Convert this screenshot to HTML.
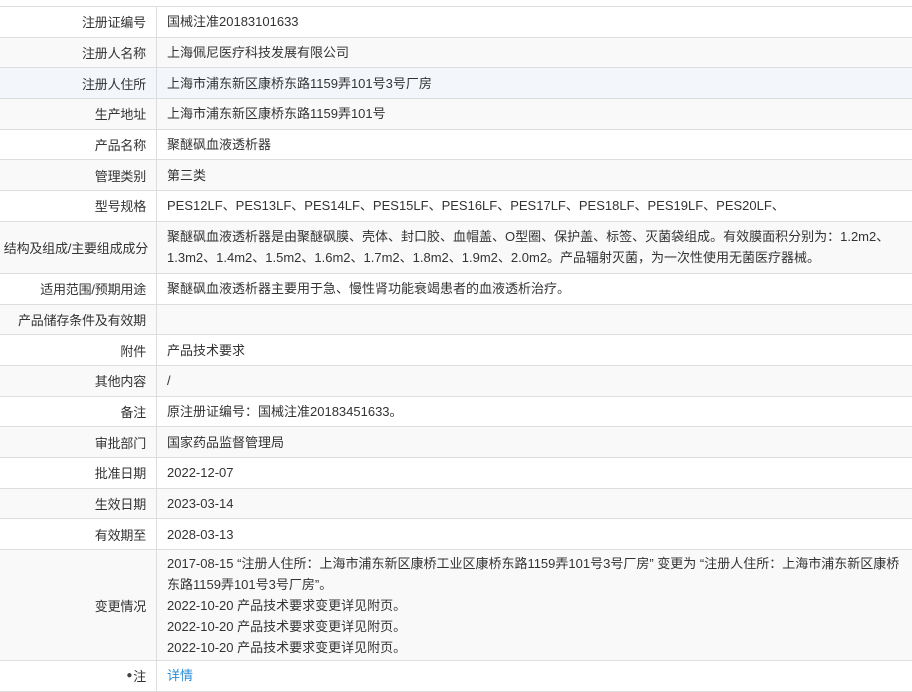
<!DOCTYPE html>
<html><head><meta charset="utf-8"><style>
body{margin:0;background:#fff;font-family:"Liberation Sans","Noto Sans CJK SC",sans-serif;font-size:13px;color:#333;}
.t{position:absolute;top:6px;left:0;width:912px;border-top:1px solid #ddd;}
.r{display:flex;border-bottom:1px solid #ddd;box-sizing:border-box;height:30.7px;}
.r:nth-child(even){background:#f9f9f9;}
.r.h{background:#f3f6fb;}
.l{width:157px;flex:none;border-right:1px solid #ddd;box-sizing:border-box;text-align:right;padding-right:10px;display:flex;align-items:center;justify-content:flex-end;white-space:nowrap;letter-spacing:-0.2px;}
.v{padding-left:10px;padding-right:6px;display:flex;align-items:center;line-height:21px;}
a{color:#2a8fd7;text-decoration:none;}
</style></head><body>
<div class="t">
<div class="r"><div class="l">注册证编号</div><div class="v">国械注准20183101633</div></div>
<div class="r"><div class="l">注册人名称</div><div class="v">上海佩尼医疗科技发展有限公司</div></div>
<div class="r h"><div class="l">注册人住所</div><div class="v">上海市浦东新区康桥东路1159弄101号3号厂房</div></div>
<div class="r"><div class="l">生产地址</div><div class="v">上海市浦东新区康桥东路1159弄101号</div></div>
<div class="r"><div class="l">产品名称</div><div class="v">聚醚砜血液透析器</div></div>
<div class="r"><div class="l">管理类别</div><div class="v">第三类</div></div>
<div class="r"><div class="l">型号规格</div><div class="v">PES12LF、PES13LF、PES14LF、PES15LF、PES16LF、PES17LF、PES18LF、PES19LF、PES20LF、</div></div>
<div class="r" style="height:52px"><div class="l" style="padding-right:8px">结构及组成/主要组成成分</div><div class="v">聚醚砜血液透析器是由聚醚砜膜、壳体、封口胶、血帽盖、O型圈、保护盖、标签、灭菌袋组成。有效膜面积分别为：1.2m2、1.3m2、1.4m2、1.5m2、1.6m2、1.7m2、1.8m2、1.9m2、2.0m2。产品辐射灭菌，为一次性使用无菌医疗器械。</div></div>
<div class="r"><div class="l">适用范围/预期用途</div><div class="v">聚醚砜血液透析器主要用于急、慢性肾功能衰竭患者的血液透析治疗。</div></div>
<div class="r"><div class="l">产品储存条件及有效期</div><div class="v"></div></div>
<div class="r"><div class="l">附件</div><div class="v">产品技术要求</div></div>
<div class="r"><div class="l">其他内容</div><div class="v">/</div></div>
<div class="r"><div class="l">备注</div><div class="v">原注册证编号：国械注准20183451633。</div></div>
<div class="r"><div class="l">审批部门</div><div class="v">国家药品监督管理局</div></div>
<div class="r"><div class="l">批准日期</div><div class="v">2022-12-07</div></div>
<div class="r"><div class="l">生效日期</div><div class="v">2023-03-14</div></div>
<div class="r"><div class="l">有效期至</div><div class="v">2028-03-13</div></div>
<div class="r" style="height:111px"><div class="l">变更情况</div><div class="v">2017-08-15 “注册人住所：上海市浦东新区康桥工业区康桥东路1159弄101号3号厂房” 变更为 “注册人住所：上海市浦东新区康桥东路1159弄101号3号厂房”。<br>2022-10-20 产品技术要求变更详见附页。<br>2022-10-20 产品技术要求变更详见附页。<br>2022-10-20 产品技术要求变更详见附页。</div></div>
<div class="r"><div class="l"><span style="font-size:10px;color:#444;margin-right:1px">●</span>注</div><div class="v"><a>详情</a></div></div>
</div>
</body></html>
